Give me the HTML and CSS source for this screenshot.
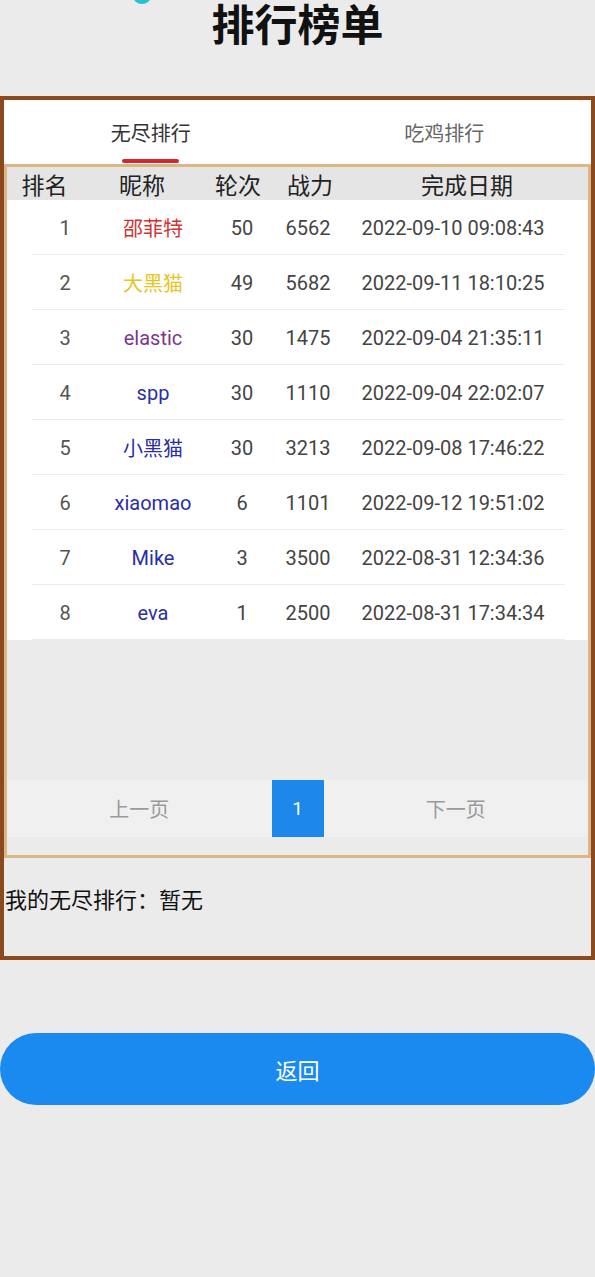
FILE: index.html
```html
<!DOCTYPE html>
<html lang="zh">
<head>
<meta charset="utf-8">
<title>排行榜单</title>
<link rel="stylesheet" href="styles.css">
</head>
<body>
<div class="page">
  <span class="dot"></span>
  <h1 class="title">排行榜单</h1>
  <div class="board">
    <div class="tabs">
      <div class="tab active"><span class="tab-label">无尽排行</span><span class="tab-bar"></span></div>
      <div class="tab"><span class="tab-label">吃鸡排行</span></div>
    </div>
    <div class="inner">
      <div class="thead">
        <div class="h h1">排名</div>
        <div class="h h2">昵称</div>
        <div class="h h3">轮次</div>
        <div class="h h4">战力</div>
        <div class="h h5">完成日期</div>
      </div>
      <div class="rows">
        <div class="row"><div class="c c1">1</div><div class="c c2 red">邵菲特</div><div class="c c3">50</div><div class="c c4">6562</div><div class="c c5">2022-09-10 09:08:43</div></div>
        <div class="row"><div class="c c1">2</div><div class="c c2 yellow">大黑猫</div><div class="c c3">49</div><div class="c c4">5682</div><div class="c c5">2022-09-11 18:10:25</div></div>
        <div class="row"><div class="c c1">3</div><div class="c c2 purple">elastic</div><div class="c c3">30</div><div class="c c4">1475</div><div class="c c5">2022-09-04 21:35:11</div></div>
        <div class="row"><div class="c c1">4</div><div class="c c2 blue">spp</div><div class="c c3">30</div><div class="c c4">1110</div><div class="c c5">2022-09-04 22:02:07</div></div>
        <div class="row"><div class="c c1">5</div><div class="c c2 blue">小黑猫</div><div class="c c3">30</div><div class="c c4">3213</div><div class="c c5">2022-09-08 17:46:22</div></div>
        <div class="row"><div class="c c1">6</div><div class="c c2 blue">xiaomao</div><div class="c c3">6</div><div class="c c4">1101</div><div class="c c5">2022-09-12 19:51:02</div></div>
        <div class="row"><div class="c c1">7</div><div class="c c2 blue">Mike</div><div class="c c3">3</div><div class="c c4">3500</div><div class="c c5">2022-08-31 12:34:36</div></div>
        <div class="row"><div class="c c1">8</div><div class="c c2 blue">eva</div><div class="c c3">1</div><div class="c c4">2500</div><div class="c c5">2022-08-31 17:34:34</div></div>
      </div>
      <div class="empty"></div>
      <div class="pager">
        <div class="pg-btn">上一页</div>
        <div class="pg-num">1</div>
        <div class="pg-btn">下一页</div>
      </div>
      <div class="pager-foot"></div>
    </div>
    <div class="mine">我的无尽排行：暂无</div>
  </div>
  <button class="back">返回</button>
</div>
</body>
</html>
```
FILE: styles.css
```css
* { box-sizing: border-box; }
html, body { margin: 0; padding: 0; }
body {
  background: #ebebeb;
  font-family: Roboto, "Noto Sans CJK SC", sans-serif;
  width: 595px;
  min-height: 1277px;
  overflow: hidden;
}
.page {
  position: relative;
  display: flex;
  flex-direction: column;
}
.dot {
  position: absolute;
  left: 133px;
  top: -12px;
  width: 18px;
  height: 16px;
  border-radius: 50%;
  background: #27c3d4;
}
.title {
  margin: 0;
  height: 96px;
  font-family: "Noto Sans CJK SC", sans-serif;
  font-size: 43px;
  font-weight: 700;
  line-height: 44px;
  text-align: center;
  color: #111;
}
.board {
  border: 4px solid #8b4a1d;
  height: 864px;
  display: flex;
  flex-direction: column;
  background: #ebebeb;
}
.tabs {
  display: flex;
  height: 64px;
  background: #fff;
}
.tab {
  flex: 1;
  display: flex;
  flex-direction: column;
  align-items: center;
}
.tab-label {
  margin-top: 20px;
  line-height: 26px;
  font-size: 20px;
  font-family: "Noto Sans CJK SC", sans-serif;
  color: #666;
}
.tab.active .tab-label { color: #333; }
.tab-bar {
  margin-top: 13px;
  width: 57px;
  height: 4px;
  border-radius: 2px;
  background: #d9232c;
}
.inner {
  border: 3px solid #dcb683;
  height: 694px;
  display: flex;
  flex-direction: column;
  background: #ebebeb;
}
.thead {
  display: flex;
  height: 33px;
  align-items: center;
  background: #e5e5e5;
  font-family: "Noto Sans CJK SC", sans-serif;
  font-size: 23px;
  line-height: 30px;
  color: #222;
}
.h { display: flex; justify-content: center; white-space: nowrap; }
.h1 { width: 75px; }
.h2 { width: 120px; }
.h3 { width: 72px; }
.h4 { width: 72px; }
.h5 { flex: 1; }
.rows {
  display: flex;
  flex-direction: column;
  background: #fff;
}
.row {
  display: flex;
  align-items: center;
  height: 55px;
  font-size: 20px;
  color: #444;
  background: linear-gradient(#ececec, #ececec) no-repeat 25px 100% / 533px 1px, #fff;
}
.c { display: flex; justify-content: center; white-space: nowrap; }
.c1 { width: 116px; color: #555; }
.c2 { width: 60px; }
.c3 { width: 118px; }
.c4 { width: 14px; }
.c5 { flex: 1; padding-left: 3px; }
.red { color: #cf3434; }
.yellow { color: #e6c41f; }
.purple { color: #7d3592; }
.blue { color: #2b2ea3; }
.empty { height: 140px; background: #ebebeb; }
.pager {
  display: flex;
  height: 57px;
  background: #f0f0f0;
}
.pg-btn {
  flex: 1;
  display: flex;
  align-items: center;
  justify-content: center;
  font-family: "Noto Sans CJK SC", sans-serif;
  font-size: 20px;
  color: #9a9a9a;
}
.pg-num {
  width: 52px;
  display: flex;
  align-items: center;
  justify-content: center;
  background: #1d87ea;
  color: #fff;
  font-size: 19px;
}
.pager-foot { flex: 1; background: #ebebeb; }
.mine {
  flex: 1;
  padding: 26px 0 0 1px;
  line-height: 28px;
  font-family: "Noto Sans CJK SC", sans-serif;
  font-size: 22px;
  color: #111;
}
.back {
  margin-top: 73px;
  height: 72px;
  width: 595px;
  border: 0;
  border-radius: 36px;
  background: #1a89f0;
  color: #fff;
  font-family: "Noto Sans CJK SC", sans-serif;
  font-size: 22px;
  padding: 0;
}
```
